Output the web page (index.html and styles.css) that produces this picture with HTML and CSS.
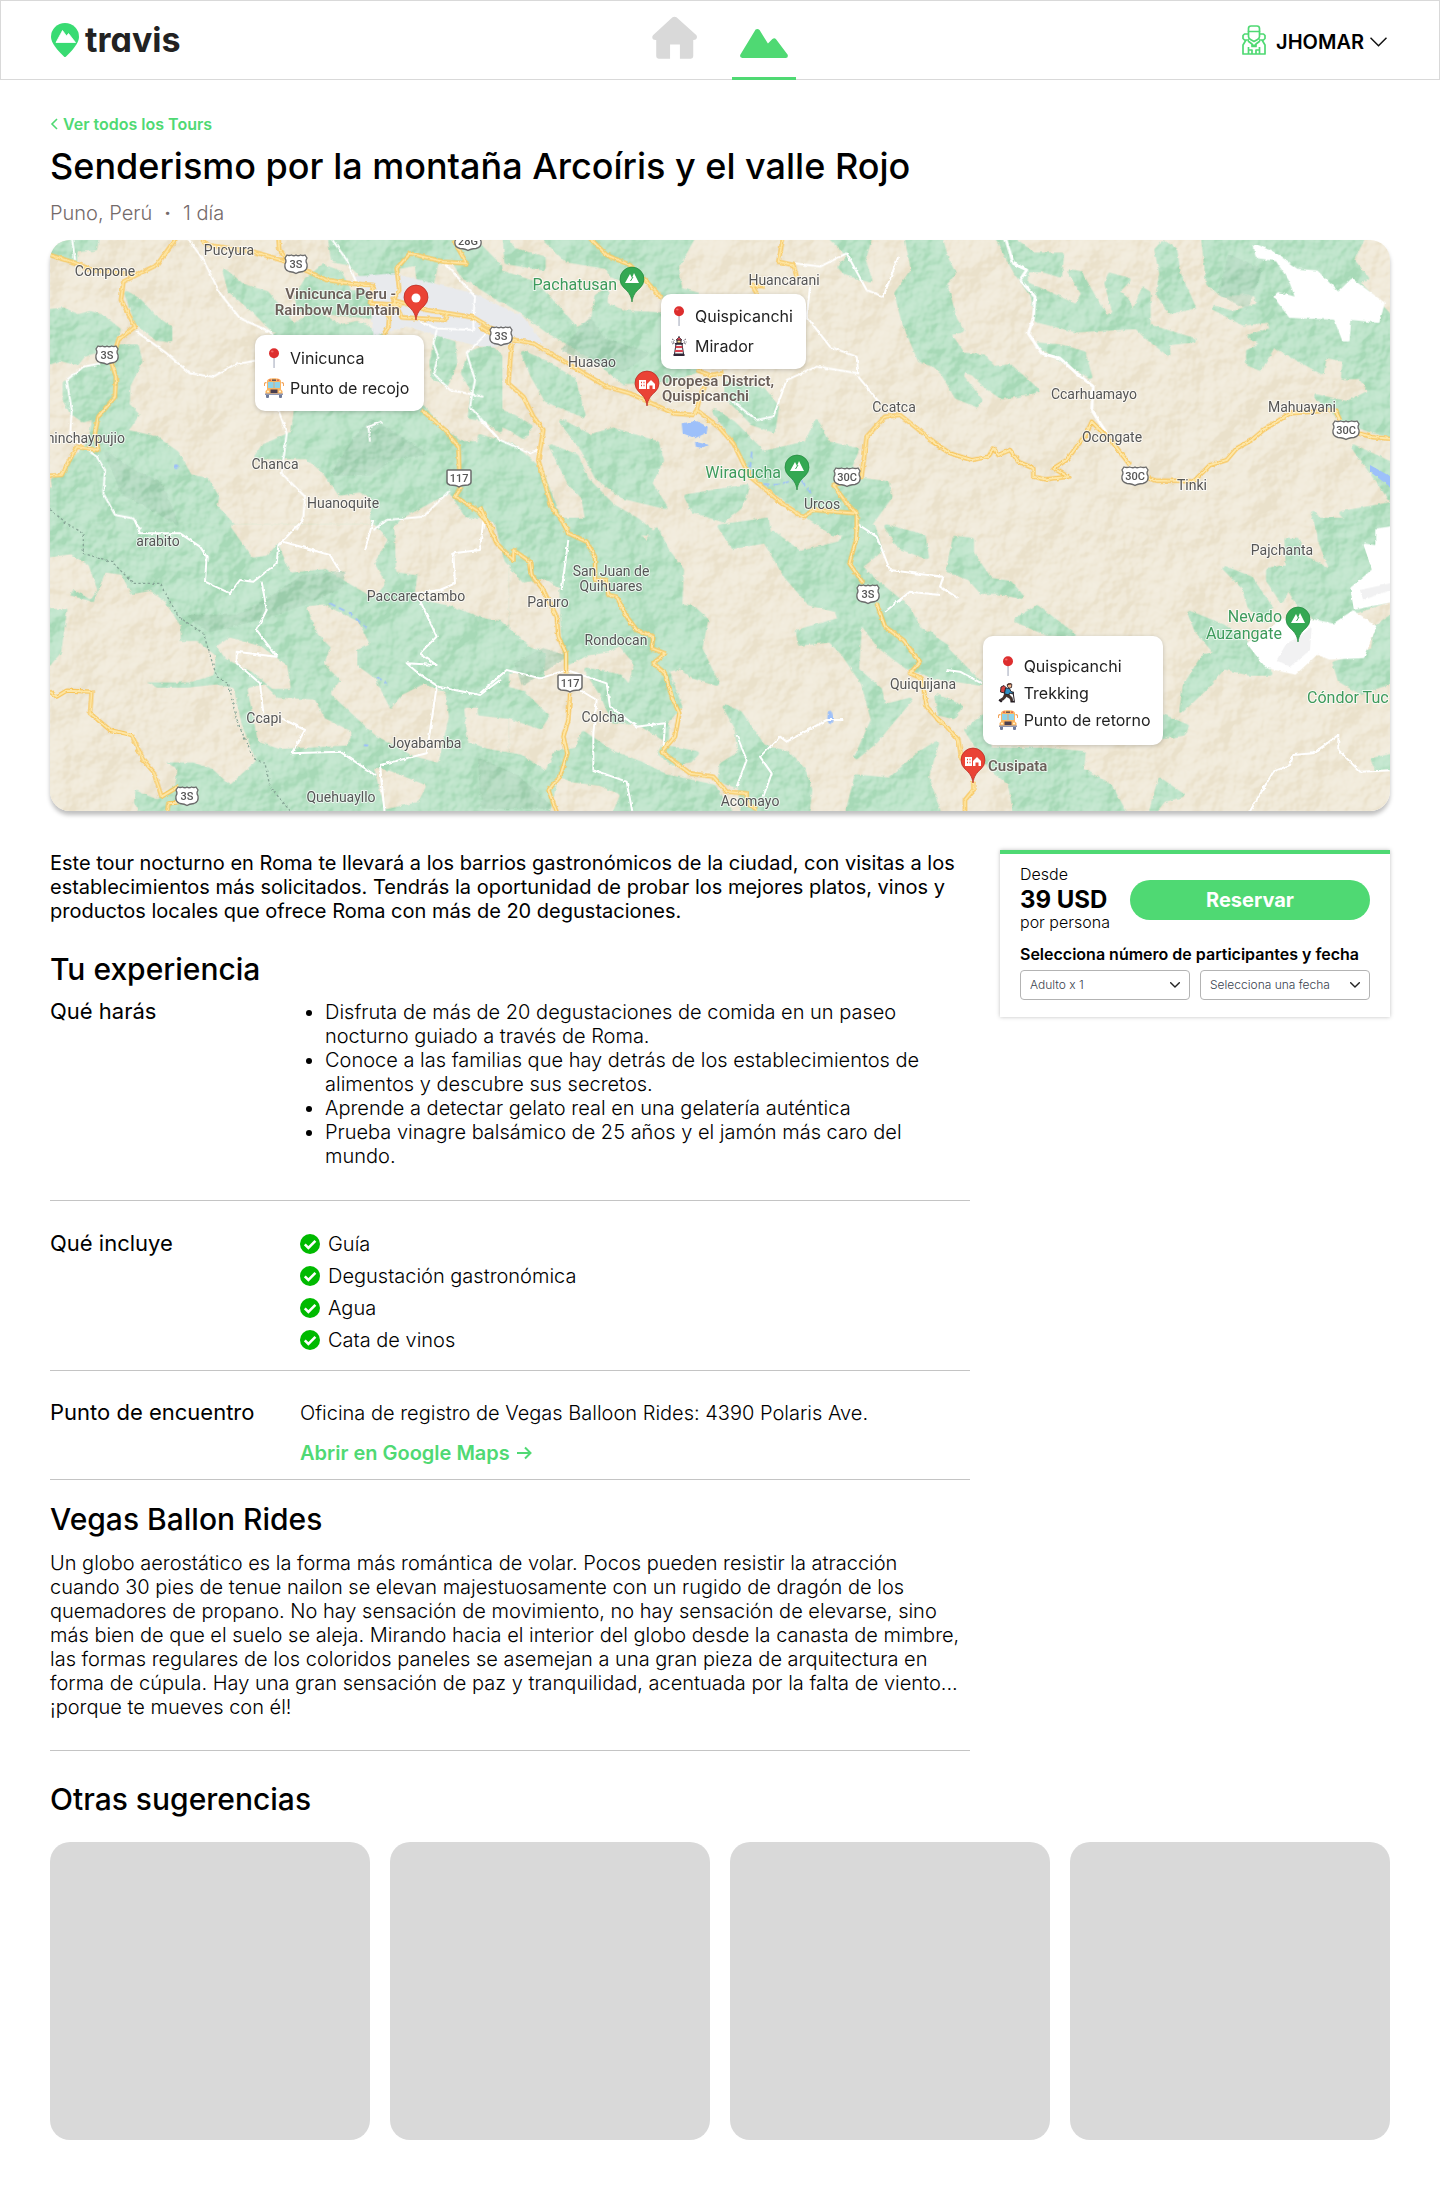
FILE: index.html
```html
<!DOCTYPE html>
<html lang="es">
<head>
<meta charset="utf-8">
<meta name="viewport" content="width=device-width, initial-scale=1">
<title>Travis - Senderismo por la montaña Arcoíris</title>
<link rel="stylesheet" href="styles.css">
</head>
<body>
<svg class="sprite" aria-hidden="true">
  <defs>
    <symbol id="i-pushpin" viewBox="0 0 20 20">
      <path d="M9.400 9h1.300v10.400a.65.65 0 0 1-1.300 0z" fill="#b4b9c8"/>
      <circle cx="10" cy="5.200" r="5" fill="#dd2e2e"/><ellipse cx="8.300" cy="3.400" rx="1.300" ry="1" fill="#f26a6a"/>
    </symbol>
    <symbol id="i-bus" viewBox="0 0 20 20">
      <path d="M0 5.500c0-1 1-1.500 2.500-1.500v1.200c-1 0-1.500.3-1.500.8v2H0zM20 5.500c0-1-1-1.500-2.500-1.500v1.200c1 0 1.500.3 1.500.8v2h1z" fill="#f2a45c"/>
      <rect x="2" y="16" width="3" height="4" rx="1" fill="#6e7a99"/><rect x="15" y="16" width="3" height="4" rx="1" fill="#6e7a99"/>
      <path d="M3 3.500C3 1 6 .3 10 .3s7 .7 7 3.200v8l1.500 1.500v3.500h-17V13L3 11.500z" fill="#fbb562"/>
      <path d="M4 4h12v6H4z" fill="#8fd3e8"/><path d="M9.600 4h.8v6h-.8z" fill="#f2a45c"/>
      <rect x="6.500" y="11.500" width="7" height="3.500" fill="#4a3f4f"/><path d="M1 15.500h18V17H1z" fill="#8f97b3"/>
      <circle cx="4" cy="13.500" r="1.100" fill="#fff3c9"/><circle cx="16" cy="13.500" r="1.100" fill="#fff3c9"/>
      <circle cx="6" cy="2.200" r=".9" fill="#e2574c"/><circle cx="14" cy="2.200" r=".9" fill="#e2574c"/><path d="M8 1.500h4v1.300H8z" fill="#4a3f4f"/>
    </symbol>
    <symbol id="i-lighthouse" viewBox="0 0 20 20">
      <path d="M7 8h6l1.500 10h-9z" fill="#f4f4f4" stroke="#2f2535"/>
      <path d="M6.800 10h6.400l.3 2H6.500zM6.200 14h7.600l.3 2H5.900z" fill="#d8414f"/>
      <path d="M4.500 18h11v2h-11zM6 7h8v1.500H6z" fill="#2f2535"/><path d="M8 4h4v3H8z" fill="#ffe08a" stroke="#2f2535"/>
      <path d="M7 4l3-3 3 3z" fill="#d8414f" stroke="#2f2535" stroke-width=".7"/><path d="M10 0v1.500" stroke="#2f2535"/>
      <path d="M5.500 4.500l-2.500-1.500M5 6H2.500M5.500 7L3 8M14.500 4.500L17 3M15 6h2.500M14.500 7L17 8" stroke="#2f2535" stroke-width=".8" stroke-dasharray="1.200 .7"/>
    </symbol>
    <symbol id="i-hiker" viewBox="0 0 20 20">
      <path d="M9.500 1.500l2-1.300 2.300 1-.3 3.300-2.300.7-1.700-1.500z" fill="#f0b48a" stroke="#241c22" stroke-width=".8"/>
      <path d="M8.500 2.500C9 0 12.500-.5 14 1.300l-3.500.7z" fill="#54342a"/>
      <path d="M3 4l3-1.500 2 2-1.500 5.500-4-1z" fill="#d8433f" stroke="#241c22" stroke-width=".9"/>
      <path d="M7.500 5l4 .5 1.500 3 2.500 1-.6 1.500-3.400-1-.5 2-4.500-1z" fill="#2f8fc4" stroke="#241c22" stroke-width=".9"/>
      <path d="M6.500 11l5 1 2.500 2.500 1 4h-2l-1-3-3.500-2-2.500 3-3 1.500-1-1.600 3-1.900z" fill="#463229" stroke="#241c22" stroke-width=".7"/>
      <path d="M1.500 16l3 2.500-1.500 1-2.500-2zM12.500 18h3.500v1.500h-3.500z" fill="#241c22"/>
      <path d="M15 8.500l1.500 11" stroke="#241c22"/>
    </symbol>
    <symbol id="i-check" viewBox="0 0 20 20">
      <circle cx="10" cy="10" r="10" fill="#00ba00"/>
      <path d="M4.800 10.300l3.600 3.600 7-7" fill="none" stroke="#fff" stroke-width="2.600"/>
    </symbol>
    <symbol id="i-caret" viewBox="0 0 10 6">
      <path d="M.7.700L5 5 9.300.7" fill="none" stroke="#222" stroke-width="1.400" stroke-linecap="round" stroke-linejoin="round"/>
    </symbol>
  </defs>
</svg>

<header class="topbar">
  <a class="logo" href="#">
    <svg class="logo-mark" viewBox="0 0 28 34" aria-hidden="true">
      <path d="M14 0a14 14 0 0 1 14 14c0 6-7 14-14 20.500C7 28 0 20 0 14A14 14 0 0 1 14 0z" fill="#38db72"/>
      <path d="M5 19.500L11.500 7.500l4 5.500 2-2.500 7 9z" fill="#fff" stroke="#fff" stroke-linejoin="round" stroke-width=".8"/>
    </svg>
    <span>travis</span>
  </a>
  <nav class="nav" aria-label="Principal">
    <a class="nav-link" href="#" aria-label="Inicio">
      <svg viewBox="0 0 64 77" aria-hidden="true"><path d="M30.500 16.500q2-1 4 0L54.500 34.500c2 2.500 0 5.500-3 5v16.500q0 2.500-2.500 2.500H38V44H28v14.500H16.500Q14 58.500 14 56V39.500c-4 .5-5-3-3-5z" fill="#d9d9d9"/></svg>
    </a>
    <a class="nav-link is-active" href="#" aria-label="Tours">
      <svg viewBox="0 0 64 77" aria-hidden="true"><path d="M23.500 29q2-1.500 4 .5L36 43l4.500-4.500q2-1.500 3.500 0L56 54.500q.8 3-2 3.300H10q-3-.3-2-3.300z" fill="#4fd973"/></svg>
    </a>
  </nav>
  <button class="user" type="button">
    <svg class="user-icon" viewBox="0 0 24 30" fill="none" stroke="#4fd973" stroke-width="1.700" stroke-linejoin="round" aria-hidden="true">
      <path d="M6.500 6.500V3.500Q6.500 1 9 1h6q2.500 0 2.500 2.500v3zM6.500 6.500v5q0 2 2 3l3.500 2 3.500-2q2-1 2-3v-5M5.500 6.500h13M6.500 9H2.500L1 10.500v3L2.500 15H7M17.500 9h4l1.500 1.500v3L21.500 15H17M4 15L1 20v9h22v-9l-3-5M6 16l4 3 2 2 2-2 4-3M10 19v2.500h4V19M6.500 22v7M17.500 22v7M6.500 25H10v4M17.500 25H14v4"/>
    </svg>
    <span>JHOMAR</span>
    <svg class="user-caret" viewBox="0 0 17 10" aria-hidden="true"><path d="M.5.800l8 8 8-8" fill="none" stroke="#111" stroke-width="1.500"/></svg>
  </button>
</header>

<main class="page">
  <a class="back" href="#"><svg viewBox="0 0 8 12" aria-hidden="true"><path d="M7 1L2 6l5 5" fill="none" stroke="#4fd973" stroke-width="1.600"/></svg>Ver todos los Tours</a>
  <h1>Senderismo por la montaña Arcoíris y el valle Rojo</h1>
  <p class="meta"><span>Puno, Perú</span><span class="dot">·</span><span>1 día</span></p>

  <section class="map" aria-label="Mapa del recorrido">
    <svg class="map-canvas" viewBox="0 0 1340 571">
      <defs>
        <filter id="rough" x="0" y="0" width="100%" height="100%">
          <feTurbulence type="fractalNoise" baseFrequency=".07" numOctaves="2" seed="4"/>
          <feDisplacementMap in="SourceGraphic" scale="9" xChannelSelector="R" yChannelSelector="G"/>
        </filter>
        <filter id="hillshade" x="0" y="0" width="100%" height="100%" color-interpolation-filters="sRGB">
          <feTurbulence type="fractalNoise" baseFrequency=".009" numOctaves="4" seed="11"/>
          <feDiffuseLighting surfaceScale="34" diffuseConstant="1" lighting-color="#fff"><feDistantLight azimuth="225" elevation="32"/></feDiffuseLighting>
        </filter>
        <g id="yellow-roads">
          <g transform="translate(-30 -30)"><path d="M20 72L110 100 150 118 290 135 350 105 412 20M290 135L250 155 243 210 285 290 235 330 215 400 228 440 225 500 175 560 165 610 175 660 110 650 65 735 20 738M480 20L500 45 640 65 740 95 860 150 930 160 1000 165 990 220 1085 225M715 20L718 60 745 95M1240 30L1280 100 1210 95 1110 70 1070 115 1078 180 1060 210 1160 240 1300 262 1380 310M1060 210L1085 262 1215 270 1220 250M1050 230L1045 290 1030 315M1145 540L1215 600 1255 650 1258 720M1265 770L1245 800 1310 840 1360 900"/></g>
          <g transform="translate(1290 -30)"><path d="M0 290L50 320 160 340 380 470 450 490 580 550 640 555 650 540 720 595 760 640 810 740 900 815 970 862 1000 840 1130 850 1130 900M325 20L380 75 450 105 500 155 545 205M910 20L895 95 940 105 950 140M830 190L815 165 855 170M650 540L660 500 690 435 730 430M690 435L650 420M95 340L85 460 130 500 160 560 190 600 175 690 215 830 265 900M1380 650L1260 555 1215 560 1160 620 1145 740 1060 765 1100 820 1130 850"/></g>
          <g transform="translate(2640 -30)"><path d="M0 630L60 670 125 690 175 680 190 655 205 675 240 660 265 695 310 715 310 740 345 748 415 740 370 715 410 690 440 650 470 610 485 575 550 640 600 705M655 745L680 752 745 752 790 755 840 705 890 690 920 655 965 630 1000 600 1080 550 1215 540 1230 570M1285 610L1330 622 1400 628"/></g>
          <g transform="translate(-30 840)"><path d="M20 508L50 530 80 512 155 515 150 580 210 630 275 645 310 720 340 755 365 830 415 800M380 890L385 850 415 848"/></g>
          <g transform="translate(1290 840)"><path d="M0 -40L50 70 100 120 100 90 150 125 155 165 190 210 230 290 235 350 258 400 258 460M270 520L265 600 250 650 262 700 240 770 205 810 235 890M250 10L265 40 320 65 345 110 345 180 380 180 385 225 410 230 440 290 470 330 520 350 515 385 555 400 520 430 555 460 575 530 598 580 585 650 545 695 630 760 700 770 740 815 800 820 800 850 830 868M1130 20L1128 60 1108 130 1150 190M1190 250L1215 320 1270 360 1320 425 1290 460 1325 475 1340 560 1380 605"/></g>
          <g transform="translate(2640 840)"><path d="M20 595L50 620 85 660 95 720M130 785L130 810 105 840 105 890"/></g>
        </g>
        <path id="pin-shape" d="M0 22C-1 15-3.500 12-8 8A12 12 0 1 1 8 8C3.500 12 1 15 0 22z"/>
        <g id="pin-peak"><use href="#pin-shape" fill="#34a853" stroke="#23863d" stroke-width=".7"/><path d="M-7 3L-2-6 0-2 2-7 7 3z" fill="#fff"/><path d="M-1.500 1L1-3" stroke="#34a853"/></g>
        <g id="pin-town"><use href="#pin-shape" fill="#ea4335" stroke="#b3261e" stroke-width=".7"/><path d="M-8-4h7v9h-7zM0 0l4-4 4 4v5H5.500V1.500h-3V5H0z" fill="#fff"/><path d="M-6-1.500h1M-3.500-1.500h1M-6 1.500h1M-3.500 1.500h1" stroke="#ea4335" stroke-width="1.300"/></g>
        <path id="shield" d="M-9-9q2 1 4.500 0Q-2-7.500 0-9q2 1.500 4.500 0Q7-8 9-9l2 3q-2 3 0 6 1 6-4 7.500-5 .5-7 2-2-1.500-7-2-5-1.500-4-7.500 2-3 0-6z" fill="#fff" stroke="#6b6b6b" stroke-width="1.300"/>
        <path id="shield-wide" d="M-11-9q3 1 5.500 0Q-2-7.500 0-9q2 1.500 5.500 0Q9-8 11-9l2 3q-2 3 0 6 1 6-5 7.500-6 .5-8 2-2-1.500-8-2-6-1.500-5-7.500 2-3 0-6z" fill="#fff" stroke="#6b6b6b" stroke-width="1.300"/>
        <path id="plate" d="M-11-8h22q1 0 1 1V4q0 2-3 3-6 0-9 2-3-2-9-2-3-1-3-3V-7q0-1 1-1z" fill="#fff" stroke="#6b6b6b" stroke-width="1.500"/>
      </defs>

      <svg viewBox="0 0 4020 1713" width="1340" height="571">
        <rect width="4020" height="1713" fill="#f0e9d8"/>
        <g filter="url(#rough)">
        <!-- vegetation -->
        <g fill="#bbe3c8" stroke="#bbe3c8" stroke-width="14" stroke-linejoin="round">
          <g transform="translate(-30 -30)">
            <path d="M20 20H170L165 55 105 60 105 95 20 70zM20 245L70 240 115 260 150 250 185 260 235 300 215 345 130 375 110 400 60 385 20 400zM75 460L130 420 180 405 215 390 235 350 290 350 300 395 265 465 262 525 290 555 255 605 345 625 410 670 450 740 500 750 530 800 525 830 600 910H20V780H45L40 750 75 730 100 690 150 640 165 560 130 570 95 545 75 510zM260 190L300 215 340 260 390 295 390 330 350 325 290 275zM555 125L610 170 680 190 740 260 765 300 700 300 640 240 570 180zM870 20H1060L1290 20 1380 110V210L1310 160 1270 140 1240 90 1190 95 1170 180 1140 170 1130 100 1075 110 1060 170 980 150 930 100 880 90zM800 150L850 110 900 130 930 190 1000 170 1000 260 900 250 780 240 770 200zM700 320L830 250 900 290 950 280 1030 315zM1190 320L1240 340 1245 400 1220 460 1180 440 1175 400zM1290 370L1350 350 1380 380V600L1340 570 1290 560 1300 480 1270 430zM770 530H1145L1200 590 1260 640 1340 640 1380 680V910H1320L1230 780 1080 860 1040 910H1000V800L960 780 900 790 850 720 800 680 650 680 670 650 760 610z"/>
          </g>
          <g transform="translate(1290 -30)">
            <path d="M190 20H640L590 110 600 180 655 195V420L560 450 430 455 350 390 270 340 200 300 120 240 0 170V90L70 130 160 160 230 230 290 300 340 270 350 200 410 160 380 110 260 90zM75 20L100 60 190 85V115L80 95zM130 370L200 400 280 450 310 555 200 510 160 440zM0 520L100 560 150 590 130 620 80 590 0 560zM245 575L330 620 400 600 530 640 545 690 510 760 555 830 430 800 350 740 310 660zM0 620L100 650 180 720 240 870V910H0zM215 650L290 680 320 750 400 830 470 870 520 910H330L310 800 270 760zM705 545L760 580 850 670 980 640 1010 575 1040 640 1130 660 1110 710 1140 750 1220 760 1230 800 1150 910H1060L960 840 800 720 780 650zM620 800L800 770 780 830 730 870 640 840zM1050 20H1170L1150 90 1170 150 1100 130 1080 110 1110 80zM1280 20H1380V410L1320 390 1270 270 1250 190 1300 120zM740 460L850 480 890 530 880 600 820 580 740 500z"/>
            <path d="M395 150L430 170 490 150 540 200 545 240 440 235 390 215z" fill="#f0e9d8" stroke="#f0e9d8"/>
          </g>
          <g transform="translate(2640 -30)">
            <path d="M0 20H30L50 90 70 130 45 160 75 270 95 300 55 310 100 375 160 380 190 415 240 410 320 480 290 490 215 500 170 470 130 430 100 420 95 440 150 510 140 525 80 500 40 430 0 390zM200 20H240L310 75 395 75 390 135 340 120 290 120 285 160 340 185 440 230 460 190 420 125 450 130 490 200 530 265 555 250 530 160 540 135 595 150 560 185 590 210 610 255 640 180 655 190V290L790 330 710 340 715 370 650 320 620 290 440 300 320 270 310 200 260 130zM680 60L700 38 735 60 745 130 790 230 720 245 685 190 695 130zM820 20H1300L1265 90 1310 145 1280 155 1400 280V620L1320 600 1240 570 1160 500 1250 520 1325 485 1290 440 1240 440 1245 390 1185 375 1175 425 1030 345 990 415 955 400V365L1000 340 960 320 1025 300 1020 270 940 280 855 235 910 250 985 225 980 195 950 185 880 195 835 160zM325 345L390 350 460 370 480 440 400 390zM1270 650L1400 710V830zM1150 850L1195 910H1170zM1235 850L1400 820V910H1290z"/>
          </g>
          <g transform="translate(-30 840)">
            <path d="M20 20H1400V890H20z"/>
            <path d="M20 120L90 110 140 140 165 210 150 230 100 200 80 230 165 255 200 165 240 170 270 230 330 220 370 250 415 320V370H470L520 410 515 460 450 480H320L310 490 350 510H440L530 500 575 510 600 620 640 720 570 785 520 740 460 720H350L405 750 400 790 350 830 280 800 275 850 300 890H20V460L70 400 90 260H20zM580 20L640 105 680 100 715 55 755 150 860 140 940 190 1000 225 1030 190 995 130 1035 60 1000 20zM1070 20L1320 0 1400 30V310L1310 280 1230 250 1130 230 1140 160 1075 150zM540 380L570 360 660 385 735 440 745 500H700L640 450 560 410zM630 510L670 500 710 540 820 545 850 600 930 640 915 670 720 680 660 660zM810 265L850 260 950 310 980 370 945 385V440L1000 480 1050 580 1090 530 1150 500 1210 520 1220 590 1190 720 1120 700 1010 640 880 520 910 480 860 430 880 380 840 340zM1010 750L1050 760 1150 800 1130 840 1040 860zM1280 570H1400V700L1290 660z" fill="#f0e9d8" stroke="#f0e9d8"/>
          </g>
          <g transform="translate(1290 840)">
            <path d="M50 0H430L500 70 530 30 560 90 605 150 600 255 640 265 678 300 660 385 710 490 640 470 600 440 560 450 600 560 560 600 500 560 450 500 470 430 420 370 380 390 320 400 260 430 250 350 245 200 200 170 130 180 80 120zM0 300L60 310 150 390 190 400 185 470 100 450 0 500zM0 530L60 500 130 520 200 590 180 620 90 590 0 580zM320 450L420 470 480 540 560 610V660L480 610 400 600 370 530zM0 690L120 710 200 760 230 700 290 690 310 640 400 700 480 730 560 770 700 800 740 860 760 890H400L430 820 360 790 280 780 230 760 200 890H0zM550 680L650 700 630 720 580 730 540 700zM735 560L780 580 850 680 920 700 970 750 990 810 980 890H790L780 800 720 780 725 735 780 700 770 620zM720 20L860 0 870 60 760 80zM860 70L880 40 960 100 1080 70 1110 20H1180L1200 90 1140 140 1180 180 1280 260 1320 330 1400 380V480L1280 440 1200 380 1140 300 1130 450 1200 510 1210 560 1290 540 1230 610 1190 660 1130 710 1180 600 1150 490 1090 400 1050 360 960 370 955 335 1080 300 1070 270 990 250 920 170zM1220 20L1330 50 1340 110 1260 80zM1130 770L1230 780 1320 700 1370 670 1340 770 1380 890H1100z"/>
          </g>
          <g transform="translate(2640 840)">
            <path d="M55 150L75 55 125 60V100L180 180 240 190 275 230 200 215H155L120 175zM260 300L320 262 430 345 350 340zM0 340L60 400 150 490 90 480 0 470zM20 530L90 560 70 590 30 580zM110 630L160 590 180 690H350L460 700 455 750 540 800 590 890H260L240 790 180 740zM700 590L770 620 760 640 700 650zM690 780L755 825 700 840 660 890zM780 280L880 320 950 370 1020 460H960L880 440 830 500 755 570 765 500 820 410 860 400 800 330zM885 145L960 175 1020 260 1000 300 960 260 940 200zM1165 0H1280L1400 60V230L1260 280 1220 315 1180 310 1110 260 1075 200 1055 240 1015 180V150L1075 140 1070 60H1100L1120 110 1210 160 1170 60zM1400 280L1340 320 1330 390 1215 430 1230 480 1290 515 1400 480zM1330 720L1400 705V740L1340 745z"/>
          </g>
        </g>
        <!-- shaded valleys -->
        <g fill="#abd3b9" opacity=".6" stroke="#abd3b9" stroke-width="12" stroke-linejoin="round">
          <path d="M170 640L260 700 330 730 380 850 300 800 220 760zM640 1090L760 1010 880 1000 870 1040 760 1090 640 1130 480 1170 420 1130 560 1130zM960 540L1060 600 1120 640 1030 650 960 700 850 700 900 620zM1540 330L1620 240 1660 300 1790 340 1720 390zM1400 1270L1480 1230 1540 1250 1420 1330zM1290 1560L1400 1610 1500 1700H1300zM3540 50L3630 90 3590 200 3510 160z"/>
        </g>
        </g>
        <rect class="relief" width="4020" height="1713" filter="url(#hillshade)"/>
        <g filter="url(#rough)">
        <!-- snow fields -->
        <g fill="#fff" stroke="#fff" stroke-width="8" stroke-linejoin="round">
          <path transform="translate(2640 -30)" d="M975 45L1040 75 1100 120 1160 125 1225 190 1265 150 1360 220 1345 275 1260 265 1255 330H1240L1215 265 1080 260 1035 200 1045 190 1100 205 1080 150 1040 90 980 80z"/>
          <path transform="translate(2640 840)" d="M955 370L1060 300H1140L1210 315 1270 275 1335 320 1300 410 1200 415 1160 400 1095 460 1010 440zM1340 30L1400 20V240L1275 265 1265 205 1330 150 1305 75 1340 80z"/>
        </g>
        <path transform="translate(2640 840)" d="M1040 420L1070 370 1110 350 1145 320 1140 390 1080 440zM1290 210L1380 190 1380 210 1300 240z" fill="#f1f1f2"/>
        <!-- city and lakes -->
        <path d="M910 110L1030 100 1270 160 1420 230 1480 310 1290 320 1170 290 1070 260 970 290 960 170z" fill="#e8eaed"/>
        <g fill="#9dc0fa">
          <path transform="translate(1290 -30)" d="M605 580L650 573 683 590 680 608 645 625 608 610zM645 635L690 645 670 655 648 650z"/>
          <path transform="translate(2640 -30)" d="M1320 705L1400 750V785L1320 725z"/>
          <ellipse cx="2340" cy="1432" rx="8" ry="20"/><circle cx="378" cy="680" r="7"/><ellipse cx="948" cy="1516" rx="7" ry="4"/>
        </g>
        <path d="M2105 635L2100 690 2120 730 2180 735 2250 715 2290 770M840 1090L900 1120 950 1165M980 1310L1010 1330" fill="none" stroke="#9dc0fa" stroke-width="5" stroke-dasharray="18 12"/>
        </g>
        <g filter="url(#rough)" fill="none" stroke-linejoin="round">
        <path transform="translate(-30 840)" d="M20 -40L80 10 130 40V100L215 125 280 190H360L415 290 490 340 530 470 565 490 590 600 640 715 675 730 690 800 765 890" stroke="#86a596" stroke-width="4" stroke-dasharray="7 7"/>
        <g stroke="#fff" stroke-width="6">
          <path transform="translate(-30 -30)" d="M95 20L105 90M440 20L490 90 540 190 600 265 690 305 700 320M290 305L380 370 450 430 520 440 580 405 645 392M180 400L130 410 80 450 95 540 90 620 170 680 195 720 190 790 225 855 280 865 300 900M715 540L740 610 725 730 795 800 790 860 770 900M1230 780L1150 860 1040 870 1000 900M870 20L920 90 950 160M1140 275L1190 295 1300 300V262L1305 200 1215 100M1190 300L1180 340 1195 380 1180 430 1230 480 1330 500M1350 300L1280 370 1305 450 1290 530 1370 620M1025 575L985 590 990 635"/>
          <path transform="translate(1290 -30)" d="M990 170L980 260 1050 350 1130 380 1135 430 1010 410 920 450 880 560 830 570 740 500M945 100L1020 110 1100 70 1160 180 1210 200 1255 80M1135 440L1200 520M0 570L60 630 150 670 180 655"/>
          <path transform="translate(2640 -30)" d="M225 20L250 100 290 120 270 150 315 200 310 265 295 310 335 370 390 385 440 430 490 470 485 540 530 610" stroke-width="9"/>
          <path transform="translate(-30 840)" d="M285 0L300 40H420L480 80 500 110 495 185 570 220 600 180 640 185 710 130 715 75 790 0M665 185L680 270 650 330 710 410 590 395V430L660 490 670 580M730 65L870 105 900 155M1330 0L1320 90 1240 100 1245 190 1200 210 1130 220 1190 350 1140 400 1190 435 1100 430 1135 460 1195 500 1320 525 1380 480M1190 500L1175 600 1160 700 1020 735 1035 890M725 595L795 630 755 700 900 695 1005 765M1000 0L975 90"/>
          <path transform="translate(1290 840)" d="M0 520L80 450 180 475 260 450 380 490 390 560 470 620 555 610 550 690M300 510L350 540 340 640V750L440 785 460 890M265 60L245 210M770 645L800 720 770 800M1090 600H1040L920 665 900 650 840 710 875 760 850 830M1130 10L1190 50 1230 150 1380 170M1215 275L1290 215 1380 225"/>
          <path transform="translate(2640 840)" d="M0 165L40 170 30 200 85 235M50 450L90 455 155 490M950 890L1030 755 1080 735 1090 705 1150 700 1225 645V690L1290 755 1400 750"/>
        </g>
        <use href="#yellow-roads" stroke="#f8c65c" stroke-width="13"/>
        <use href="#yellow-roads" stroke="#fde6a6" stroke-width="6"/>
        </g>
      </svg>

      <g class="shields">
        <g transform="translate(246 24)"><use href="#shield"/><text y="4">3S</text></g>
        <g transform="translate(57 115)"><use href="#shield"/><text y="4">3S</text></g>
        <g transform="translate(418 1)"><use href="#shield-wide"/><text y="4">28G</text></g>
        <g transform="translate(451 96)"><use href="#shield"/><text y="4">3S</text></g>
        <g transform="translate(409 238)"><use href="#plate"/><text y="4">117</text></g>
        <g transform="translate(797 237)"><use href="#shield-wide"/><text y="4">30C</text></g>
        <g transform="translate(1085 236)"><use href="#shield-wide"/><text y="4">30C</text></g>
        <g transform="translate(1296 190)"><use href="#shield-wide"/><text y="4">30C</text></g>
        <g transform="translate(137 556)"><use href="#shield"/><text y="4">3S</text></g>
        <g transform="translate(520 443)"><use href="#plate"/><text y="4">117</text></g>
        <g transform="translate(818 354)"><use href="#shield"/><text y="4">3S</text></g>
      </g>
      <g class="towns">
        <text x="55" y="36">Compone</text><text x="179" y="15">Pucyura</text>
        <text x="225" y="229">Chanca</text><text x="293" y="268">Huanoquite</text>
        <text x="75" y="203" class="end">hinchaypujio</text>
        <text x="734" y="45">Huancarani</text><text x="542" y="127">Huasao</text>
        <text x="844" y="172">Ccatca</text><text x="772" y="269">Urcos</text>
        <text x="1044" y="159">Ccarhuamayo</text><text x="1062" y="202">Ocongate</text>
        <text x="1142" y="250">Tinki</text><text x="1252" y="172">Mahuayani</text>
        <text x="108" y="306">arabito</text><text x="366" y="361">Paccarectambo</text>
        <text x="214" y="483">Ccapi</text><text x="375" y="508">Joyabamba</text><text x="291" y="562">Quehuayllo</text>
        <text x="561" y="336">San Juan de</text><text x="561" y="351">Quihuares</text>
        <text x="498" y="367">Paruro</text><text x="566" y="405">Rondocan</text><text x="553" y="482">Colcha</text>
        <text x="873" y="449">Quiquijana</text><text x="700" y="566">Acomayo</text><text x="1232" y="315">Pajchanta</text>
      </g>
      <g class="places">
        <text x="346" y="59" class="end">Vinicunca Peru -</text><text x="350" y="75" class="end">Rainbow Mountain</text>
        <text x="612" y="146">Oropesa District,</text><text x="612" y="161">Quispicanchi</text><text x="938" y="531">Cusipata</text>
      </g>
      <g class="peaks">
        <text x="567" y="50">Pachatusan</text><text x="731" y="238">Wiraqucha</text>
        <text x="1232" y="382">Nevado</text><text x="1232" y="399">Auzangate</text>
        <text x="1257" y="463" class="start">Cóndor Tuc</text>
      </g>
      <g transform="translate(366 58)"><use href="#pin-shape" fill="#ea4335" stroke="#b3261e" stroke-width=".7"/><circle r="4.500" fill="#fff"/></g>
      <use href="#pin-town" x="597" y="144"/><use href="#pin-town" x="923" y="521"/>
      <use href="#pin-peak" x="582" y="40"/><use href="#pin-peak" x="747" y="228"/><use href="#pin-peak" x="1248" y="380"/>
    </svg>
    <ul class="stop stop-pickup">
      <li><svg aria-hidden="true"><use href="#i-pushpin"/></svg>Vinicunca</li>
      <li><svg aria-hidden="true"><use href="#i-bus"/></svg>Punto de recojo</li>
    </ul>
    <ul class="stop stop-viewpoint">
      <li><svg aria-hidden="true"><use href="#i-pushpin"/></svg>Quispicanchi</li>
      <li><svg aria-hidden="true"><use href="#i-lighthouse"/></svg>Mirador</li>
    </ul>
    <ul class="stop stop-return">
      <li><svg aria-hidden="true"><use href="#i-pushpin"/></svg>Quispicanchi</li>
      <li><svg aria-hidden="true"><use href="#i-hiker"/></svg>Trekking</li>
      <li><svg aria-hidden="true"><use href="#i-bus"/></svg>Punto de retorno</li>
    </ul>
  </section>

  <div class="columns">
    <div class="details">
      <p class="intro">Este tour nocturno en Roma te llevará a los barrios gastronómicos de la ciudad, con visitas a los establecimientos más solicitados. Tendrás la oportunidad de probar los mejores platos, vinos y productos locales que ofrece Roma con más de 20 degustaciones.</p>
      <h2>Tu experiencia</h2>
      <section class="row row-first">
        <h3>Qué harás</h3>
        <ul class="bullets">
          <li>Disfruta de más de 20 degustaciones de comida en un paseo nocturno guiado a través de Roma.</li>
          <li>Conoce a las familias que hay detrás de los establecimientos de alimentos y descubre sus secretos.</li>
          <li>Aprende a detectar gelato real en una gelatería auténtica</li>
          <li>Prueba vinagre balsámico de 25 años y el jamón más caro del mundo.</li>
        </ul>
      </section>
      <section class="row">
        <h3>Qué incluye</h3>
        <ul class="checks">
          <li><svg aria-hidden="true"><use href="#i-check"/></svg>Guía</li>
          <li><svg aria-hidden="true"><use href="#i-check"/></svg>Degustación gastronómica</li>
          <li><svg aria-hidden="true"><use href="#i-check"/></svg>Agua</li>
          <li><svg aria-hidden="true"><use href="#i-check"/></svg>Cata de vinos</li>
        </ul>
      </section>
      <section class="row">
        <h3>Punto de encuentro</h3>
        <div class="meeting">
          <p>Oficina de registro de Vegas Balloon Rides: 4390 Polaris Ave.</p>
          <a href="#">Abrir en Google Maps <svg viewBox="0 0 15 14" aria-hidden="true"><path d="M0 7h13M8 1.500L13.500 7 8 12.500" fill="none" stroke="#4fd973" stroke-width="2"/></svg></a>
        </div>
      </section>
      <section class="about">
        <h2>Vegas Ballon Rides</h2>
        <p>Un globo aerostático es la forma más romántica de volar. Pocos pueden resistir la atracción cuando 30 pies de tenue nailon se elevan majestuosamente con un rugido de dragón de los quemadores de propano. No hay sensación de movimiento, no hay sensación de elevarse, sino más bien de que el suelo se aleja. Mirando hacia el interior del globo desde la canasta de mimbre, las formas regulares de los coloridos paneles se asemejan a una gran pieza de arquitectura en forma de cúpula. Hay una gran sensación de paz y tranquilidad, acentuada por la falta de viento... ¡porque te mueves con él!</p>
      </section>
    </div>

    <form class="booking">
      <div class="offer">
        <p class="price">Desde<strong>39 USD</strong>por persona</p>
        <button class="reserve" type="button">Reservar</button>
      </div>
      <fieldset>
        <legend>Selecciona número de participantes y fecha</legend>
        <div class="pickers">
          <div class="picker">
            <select aria-label="Participantes"><option>Adulto x 1</option><option>Adulto x 2</option></select>
            <svg aria-hidden="true"><use href="#i-caret"/></svg>
          </div>
          <div class="picker">
            <select aria-label="Fecha"><option>Selecciona una fecha</option></select>
            <svg aria-hidden="true"><use href="#i-caret"/></svg>
          </div>
        </div>
      </fieldset>
    </form>
  </div>

  <section class="suggestions">
    <h2>Otras sugerencias</h2>
    <div class="tiles"><div></div><div></div><div></div><div></div></div>
  </section>
</main>
</body>
</html>
```
FILE: styles.css
```css
* { box-sizing: border-box; }
body {
  margin: 0;
  background: #fff;
  color: #000;
  font-family: Inter, "Liberation Sans", sans-serif;
}
h1, h2, h3, p, ul { margin: 0; padding: 0; font-weight: 500; }
a { text-decoration: none; color: inherit; }
ul { list-style: none; }
.sprite { position: absolute; width: 0; height: 0; }

/* top bar */
.topbar {
  display: grid;
  grid-template-columns: 1fr auto 1fr;
  align-items: center;
  height: 80px;
  padding: 0 52px 0 50px;
  border: 1px solid #d9d9d9;
}
.logo {
  display: flex;
  align-items: center;
  gap: 6px;
  color: #222;
  font-size: 34px;
  font-weight: 700;
  line-height: 40px;
  font-feature-settings: "cv11";
}
.logo-mark { width: 28px; height: 34px; }
.nav { display: flex; gap: 26px; align-self: stretch; }
.nav-link { display: flex; width: 64px; margin-bottom: -1px; border-bottom: 3px solid transparent; }
.nav-link svg { width: 64px; height: 76px; }
.nav-link.is-active { border-color: #4fd973; }
.user {
  display: flex;
  align-items: center;
  justify-self: end;
  padding: 4px 0 0;
  border: 0;
  background: none;
  color: #000;
  font: 600 20px/30px Inter, sans-serif;
}
.user-icon { width: 24px; height: 30px; margin: 0 10px 4px 0; }
.user-caret { width: 17px; height: 10px; margin-left: 6px; }

/* heading */
.page { padding: 34px 50px 52px; }
.back {
  display: flex;
  align-items: center;
  gap: 5px;
  color: #4fd973;
  font-size: 16px;
  font-weight: 600;
  line-height: 20px;
}
.back svg { width: 8px; height: 12px; }
h1 { margin-top: 10px; font-size: 36px; line-height: 44px; }
.meta {
  display: flex;
  gap: 12px;
  margin: 13px 0 15px;
  color: #746a6a;
  font-size: 20px;
  font-weight: 300;
  line-height: 24px;
}
.dot { font-weight: 700; }

/* map */
.map {
  position: relative;
  border-radius: 20px;
  box-shadow: 0 4px 4px rgba(0, 0, 0, .25);
}
.map-canvas { display: block; width: 100%; height: auto; border-radius: 20px; }
.map-canvas text { font-family: Roboto, sans-serif; }
.relief { mix-blend-mode: soft-light; opacity: .4; }
.towns text, .places text, .peaks text {
  paint-order: stroke;
  stroke: rgba(255, 255, 255, .7);
  stroke-width: 2px;
  stroke-linejoin: round;
}
.towns { fill: #555; font-size: 14px; text-anchor: middle; }
.places { fill: #6b5f59; font-size: 15px; font-weight: 600; }
.peaks { fill: #3d9b5c; font-size: 16px; text-anchor: end; }
.towns .end, .places .end { text-anchor: end; }
.peaks .start { text-anchor: start; }
.shields { fill: #555; font-size: 11px; font-weight: 500; text-anchor: middle; }
.stop {
  position: absolute;
  display: flex;
  flex-direction: column;
  padding: 8px 15px 8px 9px;
  border-radius: 10px;
  background: #fff;
  box-shadow: 0 1px 4px rgba(0, 0, 0, .2);
  color: #222;
  font-size: 16px;
  font-weight: 400;
  line-height: 30px;
  white-space: nowrap;
}
.stop li { display: flex; align-items: center; gap: 6px; }
.stop svg { width: 20px; height: 20px; }
.stop-pickup { left: 15.300%; top: 16.600%; }
.stop-viewpoint { left: 45.600%; top: 9.500%; padding: 7px 13px 8px 8px; }
.stop-return { left: 69.600%; top: 69.300%; padding: 17px 12px 11px 15px; line-height: 27px; }

/* two columns */
.columns {
  display: grid;
  grid-template-columns: minmax(0, 1fr) 390px;
  gap: 30px;
  align-items: start;
  margin-top: 39px;
}
.details { padding-top: 1px; font-size: 20px; line-height: 24px; }
.intro { font-weight: 400; }
h2 { font-size: 30px; line-height: 36px; }
.intro + h2 { margin-top: 28px; }
.row {
  display: grid;
  grid-template-columns: 250px minmax(0, 1fr);
  align-items: baseline;
  padding: 27px 0 14px;
  border-bottom: 1px solid #c4c4c4;
}
.row-first { padding: 10px 0 32px; }
.row h3 { font-size: 22px; font-weight: 400; line-height: 28px; }
.row li, .row p, .about p { font-weight: 300; }
.bullets { padding: 0 30px 0 25px; list-style: disc; }
.checks li { display: flex; align-items: baseline; gap: 8px; line-height: 32px; }
.checks svg { align-self: center; width: 20px; height: 20px; }
.meeting { display: grid; gap: 16px; }
.meeting a { color: #4fd973; font-weight: 600; }
.meeting a svg { width: 15px; height: 14px; margin-left: 2px; }
.about { padding: 21px 0 31px; border-bottom: 1px solid #c4c4c4; }
.about p { margin-top: 14px; }

/* booking card */
.booking {
  padding: 11px 20px 17px;
  border-top: 4px solid #4fd973;
  box-shadow: 0 0 4px rgba(0, 0, 0, .25);
}
.offer { display: grid; grid-template-columns: 110px 1fr; align-items: center; margin-bottom: 13px; }
.price { display: flex; flex-direction: column; font-size: 16px; font-weight: 300; line-height: 18px; }
.price strong { margin-top: 4px; font-size: 24px; font-weight: 700; line-height: 26px; }
.reserve {
  height: 40px;
  margin-top: 4px;
  padding: 0;
  border: 0;
  border-radius: 20px;
  background: #4fd973;
  color: #fff;
  font: 700 20px/24px Inter, sans-serif;
}
fieldset { margin: 0; padding: 0; border: 0; min-width: 0; }
legend { padding: 0; font-size: 16px; font-weight: 600; line-height: 20px; }
.pickers { display: grid; grid-template-columns: 1fr 1fr; gap: 10px; padding-top: 6px; }
.picker { display: grid; align-items: center; }
.picker > * { grid-area: 1 / 1; }
.picker select {
  width: 100%;
  height: 30px;
  padding: 0 24px 0 9px;
  border: 1px solid #b3b3b3;
  border-radius: 4px;
  background: #fff;
  color: #39424e;
  font: 300 12px/16px Inter, sans-serif;
  appearance: none;
}
.picker svg { justify-self: end; width: 10px; height: 6px; margin-right: 10px; pointer-events: none; }

/* suggestions */
.suggestions { padding-top: 30px; }
.tiles { display: grid; grid-template-columns: repeat(4, 1fr); gap: 20px; margin-top: 25px; }
.tiles div { height: 298px; border-radius: 20px; background: #d9d9d9; }
```
